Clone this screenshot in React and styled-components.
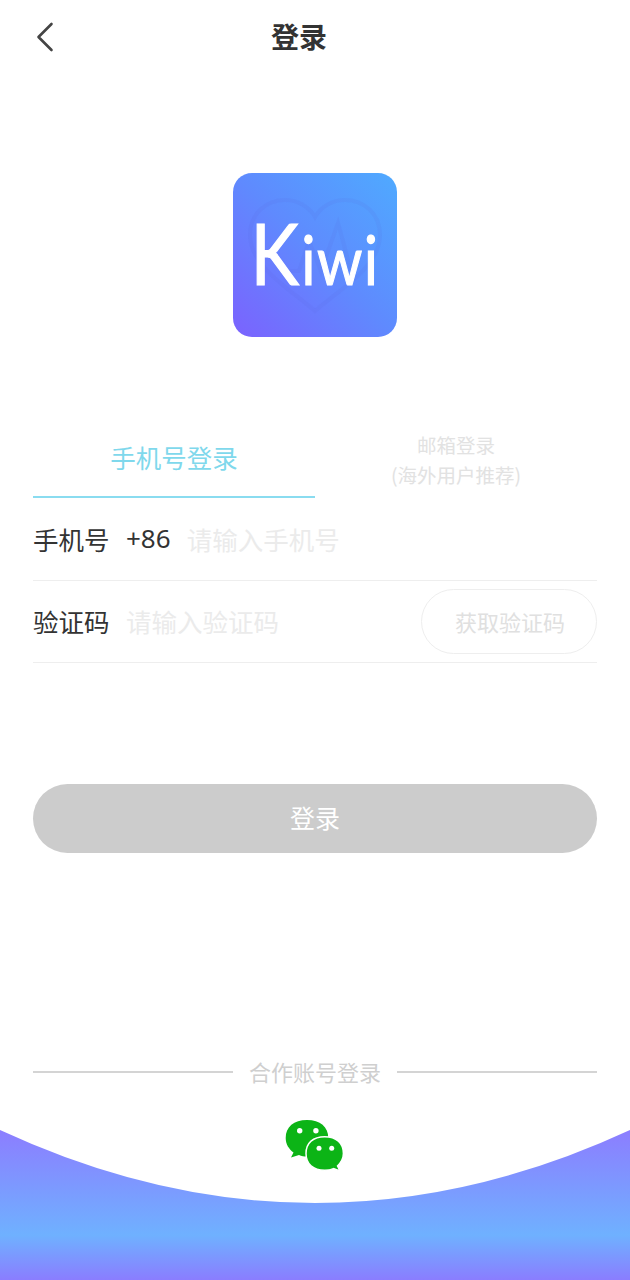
import React from 'react';
import styled, { createGlobalStyle } from 'styled-components';

const GlobalStyle = createGlobalStyle`
  *, *::before, *::after {
    box-sizing: border-box;
  }

  html, body {
    margin: 0;
    padding: 0;
    background: #fff;
    font-family: "Noto Sans CJK SC", "Noto Sans", sans-serif;
  }
`;

const Page = styled.div`
  display: flex;
  flex-direction: column;
  width: 630px;
  height: 1280px;
  overflow: hidden;
  background: #fff;
`;

const Header = styled.header`
  display: flex;
  align-items: center;
  height: 74px;
  padding-left: 36px;
`;

const BackButton = styled.button`
  display: flex;
  width: 18px;
  height: 30px;
  padding: 0;
  border: none;
  background: none;
  color: #444;
`;

const Title = styled.h1`
  margin: 0 0 2px 217px;
  font-size: 28px;
  line-height: 40px;
  font-weight: 700;
  color: #333;
`;

const Logo = styled.div`
  position: relative;
  display: flex;
  align-items: center;
  justify-content: center;
  align-self: center;
  width: 164px;
  height: 164px;
  margin-top: 99px;
  border-radius: 19px;
  background: linear-gradient(45deg, #7b62fe 0%, #5f8afe 50%, #4faaff 100%);
  overflow: hidden;
`;

const LogoHeart = styled.svg`
  position: absolute;
  inset: 0;
`;

const LogoText = styled.span`
  position: relative;
  margin-top: -6px;
  font-family: Lato, sans-serif;
  font-size: 86px;
  font-weight: 400;
  line-height: 1;
  color: #fff;
  -webkit-text-stroke: 1.2px #fff;
  transform: scaleX(0.85);
  white-space: nowrap;
`;

const LogoSmall = styled.span`
  margin-left: 3px;
  font-size: 68px;
  letter-spacing: 2px;
`;

const Tabs = styled.div`
  display: grid;
  grid-template-columns: 1fr 1fr;
  height: 78px;
  margin: 83px 33px 0;
`;

const Tab = styled.div`
  display: flex;
  align-items: center;
  justify-content: center;
  padding: ${(p) => (p.$active ? '0 0 2px' : '3px 0 0')};
  text-align: center;
  font-size: ${(p) => (p.$active ? '25.5px' : '19.5px')};
  line-height: 30px;
  color: ${(p) => (p.$active ? '#7fd8ec' : '#e2e2e2')};
  border-bottom: 2px solid ${(p) => (p.$active ? '#8adcf0' : 'transparent')};
`;

const Row = styled.div`
  display: flex;
  align-items: center;
  height: ${(p) => p.$height}px;
  margin: 0 33px;
  border-bottom: 1px solid #eeeeee;
  font-size: 25.5px;
  color: #333;
`;

const Label = styled.span`
  flex: none;
  width: 75px;
  margin-bottom: 2px;
  white-space: nowrap;
`;

const Prefix = styled.span`
  flex: none;
  margin-left: 18px;
  margin-bottom: 2px;
  font-family: "Noto Sans", sans-serif;
  font-size: 26px;
`;

const Field = styled.input`
  flex: 1;
  min-width: 0;
  margin: 0 0 2px ${(p) => p.$gap}px;
  padding: 0;
  border: none;
  outline: none;
  background: none;
  font: inherit;
  color: #333;

  &::placeholder {
    color: #ebebeb;
    opacity: 1;
  }
`;

const CodeButton = styled.button`
  flex: none;
  width: 176px;
  height: 65px;
  padding: 0 0 2px 2px;
  border: 1px solid #eeeeee;
  border-radius: 33px;
  background: #fff;
  font-family: inherit;
  font-size: 22px;
  color: #e0e0e0;
`;

const SubmitButton = styled.button`
  height: 69px;
  margin: 121px 33px 0;
  padding: 0 0 3px;
  border: none;
  border-radius: 35px;
  background: #cccccc;
  font-family: inherit;
  font-size: 25px;
  color: #fff;
`;

const Divider = styled.div`
  display: flex;
  align-items: center;
  gap: 16px;
  height: 30px;
  margin: 204px 33px 0;
  font-size: 22px;
  color: #cfcfcf;

  &::before,
  &::after {
    content: '';
    flex: 1;
    height: 2px;
    background: #d4d4d4;
  }
`;

const DividerText = styled.span`
  margin-bottom: 3px;
`;

const Footer = styled.footer`
  position: relative;
  display: flex;
  justify-content: center;
  flex: 1;
  margin-top: 32px;
`;

const Wave = styled.svg`
  position: absolute;
  left: 0;
  bottom: 0;
`;

const WechatIcon = styled.svg`
  position: relative;
`;

function App() {
  return (
    <Page>
      <GlobalStyle />
      <Header>
        <BackButton aria-label="返回">
          <svg width="18" height="30" viewBox="0 0 18 30" fill="none">
            <path d="M15.5 2 L2.5 15 L15.5 28" stroke="currentColor" strokeWidth="2.6" strokeLinecap="round" strokeLinejoin="round" />
          </svg>
        </BackButton>
        <Title>登录</Title>
      </Header>

      <Logo>
        <LogoHeart width="164" height="164" viewBox="0 0 164 164" fill="none" stroke="#5560d8" strokeOpacity="0.1" strokeWidth="4">
          <path d="M82 138 C60 118 17 95 17 62 C17 40 34 27 52 27 C65 27 76 34 82 44 C88 34 99 27 112 27 C130 27 147 40 147 62 C147 95 104 118 82 138 Z" />
          <path d="M48 98 L66 98 L76 68 L88 98 L105 50 L118 98" />
        </LogoHeart>
        <LogoText>K<LogoSmall>iwi</LogoSmall></LogoText>
      </Logo>

      <Tabs>
        <Tab $active>手机号登录</Tab>
        <Tab><span>邮箱登录<br />(海外用户推荐)</span></Tab>
      </Tabs>

      <Row $height={83}>
        <Label>手机号</Label>
        <Prefix>+86</Prefix>
        <Field $gap={16} placeholder="请输入手机号" />
      </Row>
      <Row $height={82}>
        <Label>验证码</Label>
        <Field $gap={18} placeholder="请输入验证码" />
        <CodeButton>获取验证码</CodeButton>
      </Row>

      <SubmitButton>登录</SubmitButton>

      <Divider><DividerText>合作账号登录</DividerText></Divider>

      <Footer>
        <Wave width="630" height="150" viewBox="0 0 630 150">
          <defs>
            <linearGradient id="waveFill" x1="0" y1="0" x2="0" y2="1">
              <stop offset="0" stopColor="#8c7dff" />
              <stop offset="0.7" stopColor="#6fb1ff" />
              <stop offset="1" stopColor="#8a7dff" />
            </linearGradient>
          </defs>
          <path d="M0 0 Q315 146 630 0 L630 150 L0 150 Z" fill="url(#waveFill)" />
        </Wave>
        <WechatIcon width="60" height="54" viewBox="0 0 60 54">
          <path d="M22 1 C35.2 1 43.3 7.8 43.3 19 C43.3 30.2 35.2 37.5 22 37.5 C19 37.5 16.5 37 14 36 L6 38.5 L8.5 33.5 C4 30 0.7 25.5 0.7 19 C0.7 7.8 8.8 1 22 1 Z" fill="#0cb416" />
          <path d="M39.7 17.7 C51.3 17.7 58.4 24 58.4 34.5 C58.4 39.5 56 43.5 52.5 47 L55 52 L48.5 49.6 C46 50.7 43 51.2 39.7 51.2 C28.1 51.2 21 45 21 34.5 C21 24 28.1 17.7 39.7 17.7 Z" fill="#0cb416" stroke="#fff" strokeWidth="1.5" />
          <circle cx="14.7" cy="11.7" r="2.7" fill="#fff" />
          <circle cx="30.9" cy="11.7" r="2.7" fill="#fff" />
          <circle cx="34" cy="29.3" r="2.5" fill="#fff" />
          <circle cx="46.7" cy="29.3" r="2.5" fill="#fff" />
        </WechatIcon>
      </Footer>
    </Page>
  );
}

export default App;
